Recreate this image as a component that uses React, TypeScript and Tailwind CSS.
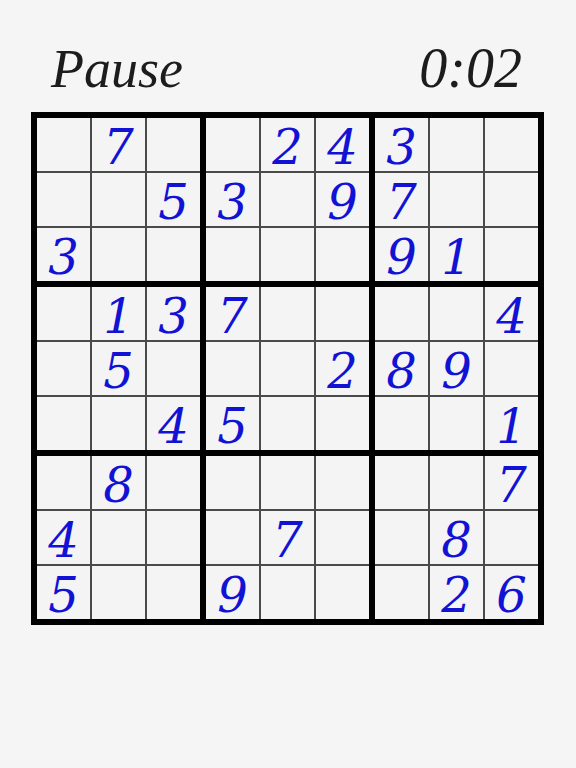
import React from "react";

// 0 = empty cell
const puzzle: number[][] = [
  [0, 7, 0, 0, 2, 4, 3, 0, 0],
  [0, 0, 5, 3, 0, 9, 7, 0, 0],
  [3, 0, 0, 0, 0, 0, 9, 1, 0],
  [0, 1, 3, 7, 0, 0, 0, 0, 4],
  [0, 5, 0, 0, 0, 2, 8, 9, 0],
  [0, 0, 4, 5, 0, 0, 0, 0, 1],
  [0, 8, 0, 0, 0, 0, 0, 0, 7],
  [4, 0, 0, 0, 7, 0, 0, 8, 0],
  [5, 0, 0, 9, 0, 0, 0, 2, 6],
];

function Block({ br, bc }: { br: number; bc: number }) {
  const cells: number[] = [];
  for (let r = 0; r < 3; r++) {
    for (let c = 0; c < 3; c++) {
      cells.push(puzzle[br * 3 + r][bc * 3 + c]);
    }
  }
  return (
    <div className="grid grid-cols-3 grid-rows-3 gap-[2px] bg-[#4a4a4a]">
      {cells.map((v, i) => (
        <div
          key={i}
          className="h-[53px] bg-[#f4f4f4] flex items-center justify-center text-[#1212d4] italic text-[48px] leading-none font-['DejaVu_Serif',serif]"
        >
          {v ? <span className="pt-[4px]">{v}</span> : null}
        </div>
      ))}
    </div>
  );
}

export default function App() {
  return (
    <main className="min-h-screen w-full bg-[#f5f5f5] font-['Liberation_Serif',serif]">
      <header className="h-[112px] flex items-end justify-between pl-[51px] pr-[54px] pb-[16px] text-[#1c1c1c] italic">
        <button className="text-[54px] leading-none">Pause</button>
        <span className="text-[56px] leading-none">0:02</span>
      </header>

      <div className="ml-[31px] w-[513px] bg-black p-[6px] grid grid-cols-3 gap-[6px]">
        {[0, 1, 2].map((br) =>
          [0, 1, 2].map((bc) => <Block key={`${br}-${bc}`} br={br} bc={bc} />)
        )}
      </div>
    </main>
  );
}
